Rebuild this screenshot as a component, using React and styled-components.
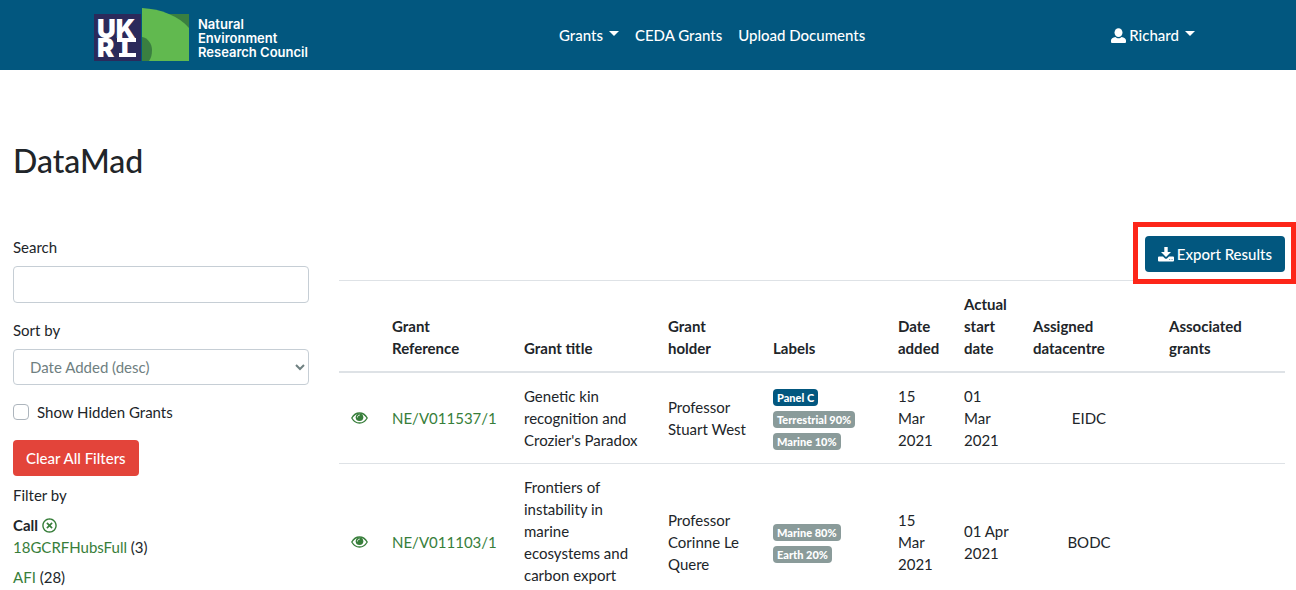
import React from "react";
import styled, { createGlobalStyle } from "styled-components";
import { FaRegTimesCircle } from "react-icons/fa";

const color = {
  navy: "#02577f",
  green: "#377e3a",
  text: "#212529",
  grey: "#8a9b9a",
  line: "#dee2e6",
  red: "#e3443a",
};

const GlobalStyle = createGlobalStyle`
  *, *::before, *::after { box-sizing: border-box; }
  body {
    margin: 0;
    background: #fff;
    color: ${color.text};
    font: 400 15px/22px Lato, "Liberation Sans", sans-serif;
    overflow-x: hidden;
  }
`;

const NavBar = styled.header`
  background: ${color.navy};
`;

const NavInner = styled.div`
  display: flex;
  align-items: center;
  justify-content: space-between;
  max-width: 1140px;
  min-height: 70px;
  margin: 0 auto;
  padding: 0 15px;
`;

const Brand = styled.a`
  display: flex;
  margin-right: 12px;
`;

const NavLinks = styled.nav`
  display: flex;
`;

const NavLink = styled.a`
  display: flex;
  align-items: center;
  padding: 8px;
  color: #fff;
  text-decoration: none;
  font-weight: 500;
  svg { margin-right: 3px; }
`;

const Caret = styled.span`
  margin: 0 0 3px 6px;
  border: 5px solid transparent;
  border-top-color: #fff;
  border-bottom: 0;
`;

const Main = styled.main`
  padding: 0 11px 0 13px;
`;

const Title = styled.h1`
  margin: 71px 0 55px;
  font-size: 32px;
  line-height: 40px;
  font-weight: 500;
`;

const Columns = styled.div`
  display: grid;
  grid-template-columns: 296px minmax(0, 1fr);
  gap: 30px;
  align-items: start;
`;

const Field = styled.div`
  display: flex;
  flex-direction: column;
  gap: 8px;
  margin-bottom: 16px;
`;

const TextInput = styled.input`
  width: 100%;
  height: 37px;
  padding: 6px 12px;
  border: 1px solid #c6ced5;
  border-radius: 4px;
  font: inherit;
`;

const SelectWrap = styled.div`
  position: relative;
  svg {
    position: absolute;
    right: 4px;
    top: 14px;
    pointer-events: none;
  }
`;

const Select = styled.select`
  display: block;
  width: 100%;
  height: 36px;
  padding: 0 16px;
  border: 1px solid #c6ced5;
  border-radius: 4px;
  background: #fff;
  color: #6f8081;
  font: inherit;
  appearance: none;
`;

const CheckLabel = styled.label`
  display: flex;
  align-items: center;
  gap: 8px;
  margin-bottom: 17px;
`;

const CheckBox = styled.input`
  appearance: none;
  width: 16px;
  height: 16px;
  margin: 0;
  border: 1px solid #adb5bd;
  border-radius: 4px;
  background: #fff;
`;

const Button = styled.button`
  display: inline-flex;
  align-items: center;
  gap: 3px;
  height: 36px;
  padding: 0 13px;
  border: 0;
  border-radius: 4px;
  background: ${(p) => (p.$danger ? color.red : color.navy)};
  color: #fff;
  font: inherit;
  font-weight: 500;
`;

const FilterHeading = styled.p`
  margin: 8px 0;
`;

const FilterName = styled.div`
  display: flex;
  align-items: center;
  gap: 4px;
  font-weight: 700;
`;

const ClearButton = styled.button`
  display: flex;
  padding: 0;
  border: 0;
  background: none;
  color: ${color.green};
`;

const FilterList = styled.ul`
  display: flex;
  flex-direction: column;
  gap: 8px;
  margin: 0;
  padding: 0;
  list-style: none;
`;

const Link = styled.a`
  color: ${color.green};
  text-decoration: none;
`;

const Toolbar = styled.div`
  display: flex;
  justify-content: flex-end;
  margin-bottom: 8px;
`;

const Highlight = styled.div`
  position: relative;
  display: flex;
  &::after {
    content: "";
    position: absolute;
    inset: -14px -11px -12px -12px;
    border: 5px solid #fd2619;
    pointer-events: none;
  }
`;

const Table = styled.table`
  width: 100%;
  table-layout: fixed;
  border-collapse: collapse;
`;

const Row = styled.tr`
  height: ${(p) => (p.$tall ? "157px" : "auto")};
`;

const Th = styled.th`
  padding: 12px;
  border-top: 1px solid ${color.line};
  border-bottom: 2px solid ${color.line};
  text-align: left;
  vertical-align: bottom;
  font-weight: 700;
`;

const Td = styled.td`
  padding: 12px;
  border-top: 1px solid ${color.line};
  text-align: ${(p) => (p.$center ? "center" : "left")};
  vertical-align: ${(p) => (p.$top ? "top" : "middle")};
`;

const ViewLink = styled(Link)`
  display: flex;
`;

const Badges = styled.div`
  display: flex;
  flex-direction: column;
  align-items: flex-start;
  gap: 5px;
  padding-top: 2px;
`;

const Badge = styled.span`
  padding: 0 4px;
  border-radius: 4px;
  background: ${(p) => (p.$primary ? color.navy : color.grey)};
  color: #fff;
  font-size: 11px;
  line-height: 17px;
  font-weight: 900;
  white-space: nowrap;
`;

const Logo = () => (
  <svg width="216" height="54" viewBox="0 0 216 54" role="img" aria-label="UKRI Natural Environment Research Council">
    <rect x="1" y="6" width="47" height="47" fill="#2b2a5b" />
    <g fill="#fff" fontFamily="Inter" fontWeight="900" fontSize="26">
      <text x="4" y="30">UK</text>
      <text x="4" y="49">R</text>
      <text x="28" y="49">I</text>
    </g>
    <path d="M24 30H43V34H24ZM26 45H43V49H26Z" fill="#fff" />
    <rect x="70" y="6" width="26" height="28" fill="#3a7f40" />
    <path d="M49 0C68 1 86 8 96 20V53H49Z" fill="#61b94f" />
    <path d="M49 29C55 30 59 36 59 42C59 47 58 50 56 53H49Z" fill="#3a7f40" />
    <g fill="#fff" fontFamily="Inter" fontWeight="600" fontSize="13">
      <text x="105" y="21">Natural</text>
      <text x="105" y="35">Environment</text>
      <text x="105" y="49">Research Council</text>
    </g>
  </svg>
);

const UserIcon = () => (
  <svg width="15" height="15" viewBox="0 0 15 15" fill="currentColor" aria-hidden="true">
    <ellipse cx="7.5" cy="4.6" rx="4" ry="4.4" />
    <path d="M0 14V12.6C0 10.6 1.8 9.6 4.4 9C5.3 9.9 6.3 10.3 7.5 10.3S9.7 9.9 10.6 9C13.2 9.6 15 10.6 15 12.6V14Q15 15 14 15H1Q0 15 0 14Z" />
  </svg>
);

const DownloadIcon = () => (
  <svg width="16" height="16" viewBox="0 0 16 16" fill="currentColor" aria-hidden="true">
    <path d="M6.3 1H9.7V6H13L8 11L3 6H6.3Z" />
    <path d="M1 10.5H5L7 12.5Q8 13.2 9 12.5L11 10.5H15Q16 10.5 16 11.5V14.5Q16 15.5 15 15.5H1Q0 15.5 0 14.5V11.5Q0 10.5 1 10.5ZM11.3 13.2V14.1H12.2V13.2ZM13.6 13.2V14.1H14.5V13.2Z" fillRule="evenodd" />
  </svg>
);

const EyeIcon = () => (
  <svg width="17" height="12" viewBox="0 0 17 12" fill="none" aria-hidden="true">
    <path d="M.8 6C2.6 2.8 5.3 1 8.5 1S14.4 2.8 16.2 6C14.4 9.2 11.7 11 8.5 11S2.600 9.2 .8 6Z" stroke="currentColor" strokeWidth="1.3" />
    <circle cx="8.5" cy="5.2" r="3.8" fill="currentColor" />
    <path d="M6.500 5C6.500 3.900 7.300 3.100 8.400 3.100" stroke="#fff" strokeWidth=".9" strokeLinecap="round" />
  </svg>
);

const columns = [
  ["", 41],
  ["Grant Reference", 132],
  ["Grant title", 144],
  ["Grant holder", 105],
  ["Labels", 125],
  ["Date added", 66],
  ["Actual start date", 69],
  ["Assigned datacentre", 136],
  ["Associated grants", 128],
];

const grants = [
  {
    ref: "NE/V011537/1",
    title: "Genetic kin recognition and Crozier's Paradox",
    holder: "Professor Stuart West",
    labels: ["Panel C", "Terrestrial 90%", "Marine 10%"],
    added: "15 Mar 2021",
    start: "01 Mar 2021",
    centre: "EIDC",
  },
  {
    ref: "NE/V011103/1",
    title: "Frontiers of instability in marine ecosystems and carbon export",
    holder: "Professor Corinne Le Quere",
    labels: ["Marine 80%", "Earth 20%"],
    added: "15 Mar 2021",
    start: "01 Apr 2021",
    centre: "BODC",
    tall: true,
  },
];

const filters = [
  ["18GCRFHubsFull", 3],
  ["AFI", 28],
];

export default function App() {
  return (
    <>
      <GlobalStyle />
      <NavBar>
        <NavInner>
          <Brand href="#"><Logo /></Brand>
          <NavLinks>
            <NavLink href="#">Grants<Caret /></NavLink>
            <NavLink href="#">CEDA Grants</NavLink>
            <NavLink href="#">Upload Documents</NavLink>
          </NavLinks>
          <NavLink href="#"><UserIcon />Richard<Caret /></NavLink>
        </NavInner>
      </NavBar>
      <Main>
        <Title>DataMad</Title>
        <Columns>
          <aside>
            <Field>
              <label htmlFor="search">Search</label>
              <TextInput id="search" type="text" />
            </Field>
            <Field>
              <label htmlFor="sort">Sort by</label>
              <SelectWrap>
                <Select id="sort" defaultValue="desc">
                  <option value="desc">Date Added (desc)</option>
                </Select>
                <svg width="10" height="8" viewBox="0 0 10 8" fill="none" stroke="#6f8081" strokeWidth="2">
                  <path d="M1 2l4 4 4-4" />
                </svg>
              </SelectWrap>
            </Field>
            <CheckLabel>
              <CheckBox type="checkbox" />
              Show Hidden Grants
            </CheckLabel>
            <Button type="button" $danger>Clear All Filters</Button>
            <FilterHeading>Filter by</FilterHeading>
            <FilterName>
              Call
              <ClearButton type="button" aria-label="Clear call filter"><FaRegTimesCircle size={15} /></ClearButton>
            </FilterName>
            <FilterList>
              {filters.map(([name, count]) => (
                <li key={name}><Link href="#">{name}</Link> ({count})</li>
              ))}
            </FilterList>
          </aside>
          <section>
            <Toolbar>
              <Highlight>
                <Button type="button"><DownloadIcon />Export Results</Button>
              </Highlight>
            </Toolbar>
            <Table>
              <colgroup>
                {columns.map(([name, width]) => <col key={name} style={{ width }} />)}
              </colgroup>
              <thead>
                <tr>{columns.map(([name]) => <Th key={name} scope="col">{name}</Th>)}</tr>
              </thead>
              <tbody>
                {grants.map((g) => (
                  <Row key={g.ref} $tall={g.tall}>
                    <Td><ViewLink href="#" aria-label={`View ${g.ref}`}><EyeIcon /></ViewLink></Td>
                    <Td><Link href="#">{g.ref}</Link></Td>
                    <Td $top>{g.title}</Td>
                    <Td>{g.holder}</Td>
                    <Td>
                      <Badges>
                        {g.labels.map((l) => <Badge key={l} $primary={l.startsWith("Panel")}>{l}</Badge>)}
                      </Badges>
                    </Td>
                    <Td>{g.added}</Td>
                    <Td>{g.start}</Td>
                    <Td $center>{g.centre}</Td>
                    <Td />
                  </Row>
                ))}
              </tbody>
            </Table>
          </section>
        </Columns>
      </Main>
    </>
  );
}
